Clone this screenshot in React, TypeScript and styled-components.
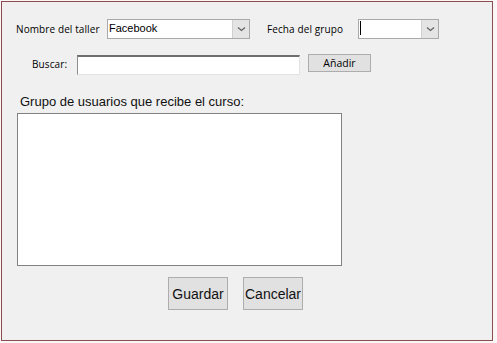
import React from "react";
import styled, { createGlobalStyle } from "styled-components";

const Global = createGlobalStyle`
  html, body { margin: 0; padding: 0; background: #fbf7f7; }
  body { width: 497px; height: 343px; overflow: hidden; }
`;

const Window = styled.div`
  box-sizing: border-box;
  margin: 1px 0 0 1px;
  width: 492px;
  height: 340px;
  border: 1px solid #8b4d4f;
  background: #f0f0f0;
  padding: 17px 0 0 14px;
  display: flex;
  flex-direction: column;
  font-family: "Open Sans", "Noto Sans", sans-serif;
  color: #000;
`;

const Row = styled.div<{ $top?: number; $indent?: number }>`
  display: flex;
  align-items: flex-start;
  margin-top: ${(p) => p.$top ?? 0}px;
  padding-left: ${(p) => p.$indent ?? 0}px;
`;

const Label = styled.span<{ $w: number; $ml?: number; $h?: number }>`
  width: ${(p) => p.$w}px;
  margin-left: ${(p) => p.$ml ?? 0}px;
  height: ${(p) => p.$h ?? 20}px;
  line-height: ${(p) => p.$h ?? 20}px;
  font-size: 10px;
  letter-spacing: 0.1px;
  white-space: nowrap;
  flex: none;
`;

const Combo = styled.div<{ $w: number }>`
  box-sizing: border-box;
  width: ${(p) => p.$w}px;
  height: 20px;
  border: 1px solid #a9a9a9;
  background: #fff;
  display: flex;
  flex: none;
`;

const ComboText = styled.div`
  flex: 1;
  font-family: "Liberation Sans", Arial, sans-serif;
  font-size: 11px;
  line-height: 17px;
  padding-left: 1px;
  position: relative;
`;

const Caret = styled.span`
  position: absolute;
  left: 1px;
  top: 1px;
  width: 1px;
  height: 14px;
  background: #000;
`;

const ArrowBtn = styled.div`
  width: 16px;
  border-left: 1px solid #d0d0d0;
  background: #e4e4e4;
  display: flex;
  align-items: center;
  justify-content: center;
`;

const TextInput = styled.div`
  box-sizing: border-box;
  width: 223px;
  height: 20px;
  margin-top: 1px;
  background: #fff;
  border-top: 2px solid #6e6e6e;
  border-left: 1px solid #8e8e8e;
  border-right: 1px solid #e3e3e3;
  border-bottom: 1px solid #e3e3e3;
  flex: none;
`;

const SmallButton = styled.button`
  box-sizing: border-box;
  width: 63px;
  height: 18px;
  margin-left: 8px;
  padding: 0;
  border: 1px solid #adadad;
  background: #e1e1e1;
  font-family: "Open Sans", "Noto Sans", sans-serif;
  font-size: 10.5px;
  line-height: 15px;
  color: #000;
  flex: none;
`;

const Title = styled.div`
  margin-top: 19px;
  padding-left: 4px;
  font-family: "Liberation Sans", Arial, sans-serif;
  font-size: 13px;
  line-height: 16px;
  color: #111;
`;

const ListBox = styled.div`
  box-sizing: border-box;
  margin-top: 3px;
  margin-left: 1px;
  width: 325px;
  height: 153px;
  border: 1px solid #828282;
  background: #fff;
`;

const Actions = styled.div`
  display: flex;
  gap: 15px;
  margin-top: 11px;
  padding-left: 152px;
`;

const BigButton = styled.button`
  box-sizing: border-box;
  width: 60px;
  height: 33px;
  padding: 0;
  border: 1px solid #adadad;
  background: #e1e1e1;
  font-family: "Liberation Sans", Arial, sans-serif;
  font-size: 14px;
  color: #111;
`;

const Chevron = () => (
  <svg width="9" height="6" viewBox="0 0 9 6">
    <path d="M1 1.5 L4.5 4.5 L8 1.5" fill="none" stroke="#606060" strokeWidth="1.2" />
  </svg>
);

export default function App() {
  return (
    <>
      <Global />
      <Window>
        <Row>
          <Label $w={91}>Nombre del taller</Label>
          <Combo $w={143}>
            <ComboText>Facebook</ComboText>
            <ArrowBtn>
              <Chevron />
            </ArrowBtn>
          </Combo>
          <Label $w={91} $ml={17}>Fecha del grupo</Label>
          <Combo $w={81}>
            <ComboText>
              <Caret />
            </ComboText>
            <ArrowBtn>
              <Chevron />
            </ArrowBtn>
          </Combo>
        </Row>
        <Row $top={15} $indent={16}>
          <Label $w={45} $h={21}>Buscar:</Label>
          <TextInput />
          <SmallButton>Añadir</SmallButton>
        </Row>
        <Title>Grupo de usuarios que recibe el curso:</Title>
        <ListBox />
        <Actions>
          <BigButton>Guardar</BigButton>
          <BigButton>Cancelar</BigButton>
        </Actions>
      </Window>
    </>
  );
}
